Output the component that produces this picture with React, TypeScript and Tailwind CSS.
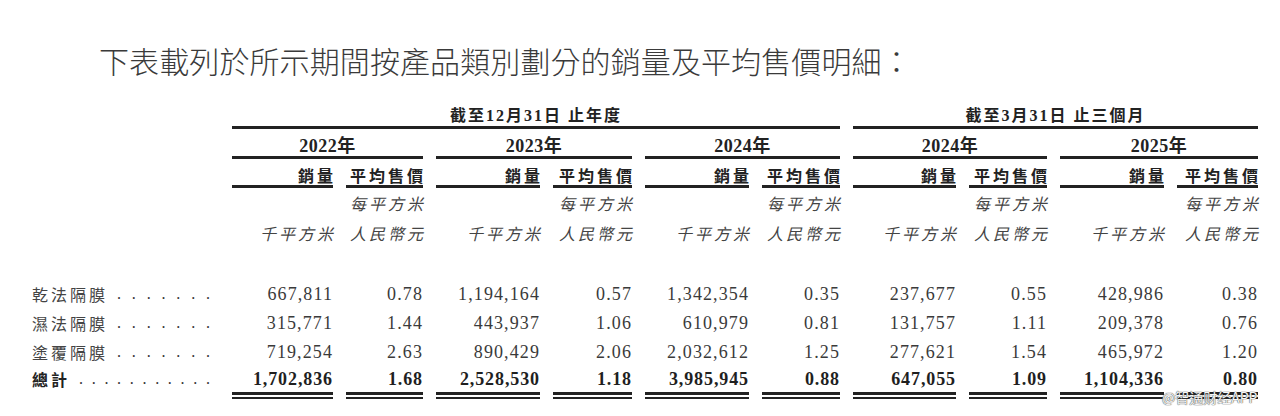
const serif = "font-['Liberation_Serif','Noto_Sans_CJK_TC',serif]";
const sans = "font-['Noto_Sans_CJK_TC','Noto_Sans_CJK_SC',sans-serif]";

const groups = ['2022年', '2023年', '2024年', '2024年', '2025年'];

const rows: { label: string; values: string[] }[] = [
    {
        label: '乾法隔膜',
        values: ['667,811', '0.78', '1,194,164', '0.57', '1,342,354', '0.35', '237,677', '0.55', '428,986', '0.38'],
    },
    {
        label: '濕法隔膜',
        values: ['315,771', '1.44', '443,937', '1.06', '610,979', '0.81', '131,757', '1.11', '209,378', '0.76'],
    },
    {
        label: '塗覆隔膜',
        values: ['719,254', '2.63', '890,429', '2.06', '2,032,612', '1.25', '277,621', '1.54', '465,972', '1.20'],
    },
];

const totals = ['1,702,836', '1.68', '2,528,530', '1.18', '3,985,945', '0.88', '647,055', '1.09', '1,104,336', '0.80'];

function Dots({ count }: { count: number }) {
    return (
        <span className="flex flex-1 justify-between ml-[9px] mr-[9px]">
            {Array.from({ length: count }).map((_, i) => (
                <span key={i} className={`${serif} text-[16px]`}>.</span>
            ))}
        </span>
    );
}

export default function App() {
    return (
        <div className="w-[1280px] h-[416px] bg-white overflow-hidden relative text-[#333]">
            {/* Title */}
            <div className="h-[100px] pt-[44px] pl-[99px]">
                <p className={`${sans} font-light text-[30px] leading-[32px] tracking-[0.1px] text-[#3a3a3a]`}>
                    下表載列於所示期間按產品類別劃分的銷量及平均售價明細：
                </p>
            </div>

            {/* Table */}
            <div className="grid grid-cols-[219px_101px_77px_104px_79px_104px_78px_103px_78px_104px_81px] gap-x-[13px]">
                {/* period headers */}
                <div className="h-[29px]" />
                <div className="col-span-6 h-[29px] border-b-[3px] border-[#222] flex items-end justify-center">
                    <span className={`${serif} font-bold text-[16px] leading-[20px] tracking-[2px] text-[#222]`}>
                        截至12月31日 止年度
                    </span>
                </div>
                <div className="col-span-4 h-[29px] border-b-[3px] border-[#222] flex items-end justify-center">
                    <span className={`${serif} font-bold text-[16px] leading-[20px] tracking-[2px] text-[#222]`}>
                        截至3月31日 止三個月
                    </span>
                </div>

                {/* years */}
                <div className="h-[30px]" />
                {groups.map((g, i) => (
                    <div key={i} className="col-span-2 h-[30px] border-b-[3px] border-[#222] flex items-end justify-center">
                        <span className={`${serif} font-bold text-[18px] leading-[20px] tracking-[0.5px] text-[#222]`}>{g}</span>
                    </div>
                ))}

                {/* column headers */}
                <div className="h-[29px]" />
                {groups.map((_, i) => (
                    <div key={i} className="contents">
                        <div className="h-[29px] border-b-[3px] border-[#222] flex items-end justify-end">
                            <span className={`${sans} font-bold text-[16px] leading-[20px] tracking-[3px] mr-[-3px] text-[#222]`}>銷量</span>
                        </div>
                        <div className="h-[29px] border-b-[3px] border-[#222] flex items-end justify-end">
                            <span className={`${sans} font-bold text-[16px] leading-[20px] tracking-[3px] mr-[-3px] text-[#222]`}>平均售價</span>
                        </div>
                    </div>
                ))}

                {/* units */}
                <div className="h-[30px]" />
                {groups.map((_, i) => (
                    <div key={i} className="contents">
                        <div className="h-[30px]" />
                        <div className="h-[30px] flex items-center justify-end">
                            <span className={`${sans} italic text-[16px] leading-[20px] tracking-[3px] mr-[-3px] text-[#444]`}>每平方米</span>
                        </div>
                    </div>
                ))}
                <div className="h-[30px]" />
                {groups.map((_, i) => (
                    <div key={i} className="contents">
                        <div className="h-[30px] flex items-center justify-end">
                            <span className={`${sans} italic text-[16px] leading-[20px] tracking-[3px] mr-[-3px] text-[#444]`}>千平方米</span>
                        </div>
                        <div className="h-[30px] flex items-center justify-end">
                            <span className={`${sans} italic text-[16px] leading-[20px] tracking-[3px] mr-[-3px] text-[#444]`}>人民幣元</span>
                        </div>
                    </div>
                ))}

                <div className="col-span-11 h-[31px]" />

                {/* data rows */}
                {rows.map(row => (
                    <div key={row.label} className="contents">
                        <div className="h-[29px] flex items-center pl-[32px]">
                            <span className={`${sans} text-[16px] leading-[20px] tracking-[3px] text-[#444]`}>{row.label}</span>
                            <Dots count={7} />
                        </div>
                        {row.values.map((v, i) => (
                            <div key={i} className="h-[29px] flex items-center justify-end">
                                <span className={`${serif} text-[18px] leading-[20px] tracking-[1.1px] text-[#3a3a3a]`}>{v}</span>
                            </div>
                        ))}
                    </div>
                ))}

                {/* total */}
                <div className="h-[26px] flex items-center pl-[32px]">
                    <span className={`${sans} font-bold text-[16px] leading-[20px] tracking-[3px] text-[#222]`}>總計</span>
                    <Dots count={11} />
                </div>
                {totals.map((v, i) => (
                    <div key={i} className="flex flex-col">
                        <div className="h-[26px] flex items-center justify-end">
                            <span className={`${serif} font-bold text-[18px] leading-[20px] tracking-[0.9px] text-[#1f1f1f]`}>{v}</span>
                        </div>
                        <div className="h-[3px] bg-[#222]" />
                        <div className="h-[2px] mt-[2px] bg-[#222]" />
                    </div>
                ))}
            </div>

            {/* watermark */}
            <div
                className={`absolute left-[1162px] top-[389px] ${sans} text-[14px] leading-[16px] text-[#f6f6f6] [text-shadow:0_0_1px_#444,0_0_1px_#444]`}
            >
                @智通财经APP
            </div>
        </div>
    );
}
